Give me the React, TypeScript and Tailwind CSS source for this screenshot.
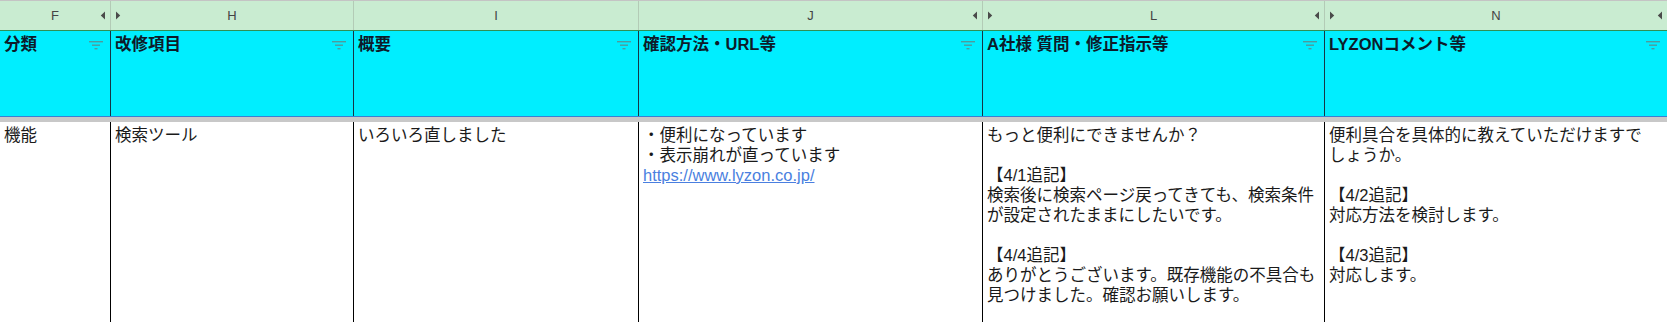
import React from 'react';

const FONT = { fontFamily: '"Liberation Sans", "Noto Sans CJK JP", sans-serif' };

type Col = {
  letter: string;
  title: string;
  body: React.ReactNode;
  left?: boolean;
  right?: boolean;
};

function ArrowLeft() {
  return (
    <svg width="6" height="9" viewBox="0 0 6 9" className="shrink-0">
      <path d="M5 0.5 L0.8 4.5 L5 8.5 Z" fill="#4a4a4a" />
    </svg>
  );
}

function ArrowRight() {
  return (
    <svg width="6" height="9" viewBox="0 0 6 9" className="shrink-0">
      <path d="M1 0.5 L5.2 4.5 L1 8.5 Z" fill="#4a4a4a" />
    </svg>
  );
}

function FilterIcon() {
  return (
    <svg width="14" height="10" viewBox="0 0 14 10" className="shrink-0">
      <rect x="0" y="1" width="14" height="1.4" fill="#4f9a9c" />
      <rect x="3" y="4.5" width="8" height="1.4" fill="#4f9a9c" />
      <rect x="5.5" y="8" width="3" height="1.4" fill="#4f9a9c" />
    </svg>
  );
}

const cols: Col[] = [
  { letter: 'F', title: '分類', body: '機能', right: true },
  { letter: 'H', title: '改修項目', body: '検索ツール', left: true },
  { letter: 'I', title: '概要', body: 'いろいろ直しました' },
  {
    letter: 'J',
    title: '確認方法・URL等',
    body: (
      <>
        {'・便利になっています\n・表示崩れが直っています\n'}
        <a href="#" className="text-[#4a7fe0] underline">
          https://www.lyzon.co.jp/
        </a>
      </>
    ),
    right: true,
  },
  {
    letter: 'L',
    title: 'A社様 質問・修正指示等',
    body:
      'もっと便利にできませんか？\n\n【4/1追記】\n検索後に検索ページ戻ってきても、検索条件が設定されたままにしたいです。\n\n【4/4追記】\nありがとうございます。既存機能の不具合も見つけました。確認お願いします。',
    left: true,
    right: true,
  },
  {
    letter: 'N',
    title: 'LYZONコメント等',
    body: '便利具合を具体的に教えていただけますで\nしょうか。\n\n【4/2追記】\n対応方法を検討します。\n\n【4/3追記】\n対応します。',
    left: true,
    right: true,
  },
];

const widths = ['w-[110px]', 'w-[243px]', 'w-[285px]', 'w-[344px]', 'w-[342px]', 'w-[343px]'];

export default function App() {
  return (
    <div className="w-[1667px] h-[322px] bg-white overflow-hidden" style={FONT}>
      {/* 列番号 */}
      <div className="flex h-[31px] border-t border-[#c4c4c4] border-b border-b-[#2f8f55] bg-[#c9ecd1]">
        {cols.map((c, i) => (
          <div
            key={c.letter}
            className={`${widths[i]} shrink-0 flex items-center px-[4px] text-[13px] text-[#444] ${i > 0 ? 'border-l border-[#b3cbb6]' : ''}`}
          >
            <div className="w-[8px]">{c.left && <ArrowRight />}</div>
            <div className="flex-1 text-center">{c.letter}</div>
            <div className="w-[8px] flex justify-end">{c.right && <ArrowLeft />}</div>
          </div>
        ))}
      </div>

      {/* 見出し */}
      <div className="flex h-[86px] bg-[#00eeff] border-b border-[#3b7fd0]">
        {cols.map((c, i) => (
          <div
            key={c.letter}
            className={`${widths[i]} shrink-0 flex items-start justify-between pl-[4px] pr-[7px] pt-[3px] ${i > 0 ? 'border-l border-[#163445]' : ''}`}
          >
            <span className="text-[16.5px] leading-[20px] font-bold text-[#0d1b2a] whitespace-nowrap">
              {c.title}
            </span>
            <div className="mt-[6px]">
              <FilterIcon />
            </div>
          </div>
        ))}
      </div>

      <div className="h-[5px] bg-[#c8c8c8]" />

      {/* データ */}
      <div className="flex h-[200px]">
        {cols.map((c, i) => (
          <div
            key={c.letter}
            className={`${widths[i]} shrink-0 pl-[4px] pr-[3px] pt-[3px] text-[16.5px] leading-[20px] text-[#1a1a1a] whitespace-pre-wrap break-all ${i > 0 ? 'border-l border-black' : ''}`}
          >
            {c.body}
          </div>
        ))}
      </div>
    </div>
  );
}
